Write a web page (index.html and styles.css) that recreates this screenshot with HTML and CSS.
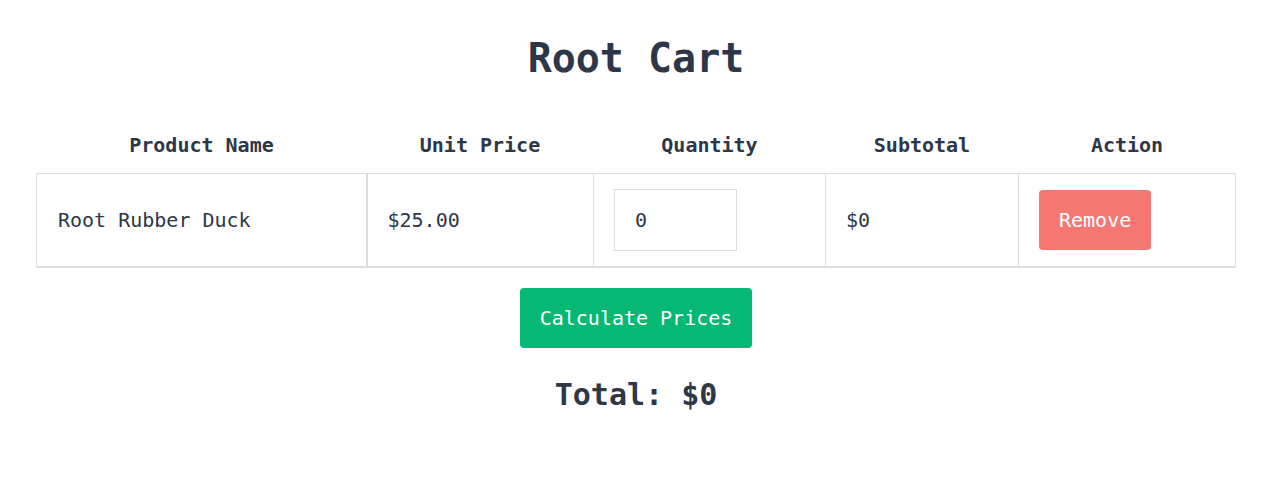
FILE: index.html
```html
<!DOCTYPE html>
<html lang="en">
<head>
<meta charset="utf-8">
<title>Root Cart</title>
<link rel="stylesheet" href="styles.css">
</head>
<body>
<div class="page">
  <h1 class="title">Root Cart</h1>
  <table class="cart">
    <colgroup>
      <col class="c-name">
      <col class="c-price">
      <col class="c-qty">
      <col class="c-sub">
      <col class="c-act">
    </colgroup>
    <thead>
      <tr>
        <th>Product Name</th>
        <th>Unit Price</th>
        <th>Quantity</th>
        <th>Subtotal</th>
        <th>Action</th>
      </tr>
    </thead>
    <tbody>
      <tr>
        <td class="name">Root Rubber Duck</td>
        <td>$25.00</td>
        <td><input class="qty" type="number" value="0"></td>
        <td>$0</td>
        <td><button class="btn btn-remove">Remove</button></td>
      </tr>
    </tbody>
  </table>
  <div class="actions">
    <button class="btn btn-calc">Calculate Prices</button>
  </div>
  <h2 class="total">Total: $0</h2>
</div>
</body>
</html>
```

FILE: styles.css
```css
html, body {
  margin: 0;
  padding: 0;
  background: #ffffff;
}

body {
  font-family: "DejaVu Sans Mono", "Liberation Mono", monospace;
  color: #2d3748;
}

.page {
  width: 1200px;
  margin-left: 36px;
  display: flex;
  flex-direction: column;
  align-items: center;
}

.title {
  margin: 34px 0 35px;
  font-size: 40px;
  line-height: 48px;
  font-weight: 700;
}

.cart {
  width: 1199px;
  border-collapse: collapse;
  table-layout: fixed;
}

.c-name { width: 330px; }
.c-price { width: 227px; }
.c-qty { width: 232px; }
.c-sub { width: 193px; }
.c-act { width: 217px; }

.cart th {
  padding: 16px 0;
  font-size: 20px;
  line-height: 24px;
  font-weight: 700;
  text-align: center;
}

.cart td {
  border: 1px solid #dddddd;
  border-bottom: 2px solid #dddddd;
  padding: 15px 20px 15px;
  font-size: 20px;
  line-height: 24px;
  text-align: left;
  vertical-align: middle;
}

.cart td.name {
  padding-left: 21px;
  border-right: 2px solid #dddddd;
}

.qty {
  box-sizing: border-box;
  width: 123px;
  height: 62px;
  border: 1px solid #dddddd;
  padding: 0 20px;
  font-family: inherit;
  font-size: 20px;
  color: #2d3748;
  background: #ffffff;
  outline: none;
  -moz-appearance: textfield;
  display: block;
}

.qty::-webkit-outer-spin-button,
.qty::-webkit-inner-spin-button {
  -webkit-appearance: none;
  margin: 0;
}

.btn {
  box-sizing: border-box;
  height: 60px;
  padding: 0 20px;
  border: none;
  border-radius: 4px;
  font-family: inherit;
  font-size: 20px;
  color: #ffffff;
  cursor: pointer;
}

.btn-remove {
  background: #f47771;
  display: block;
}

.actions {
  margin-top: 20px;
}

.btn-calc {
  background: #05b873;
}

.total {
  margin: 29px 0 0;
  font-size: 30px;
  line-height: 36px;
  font-weight: 700;
}
```
